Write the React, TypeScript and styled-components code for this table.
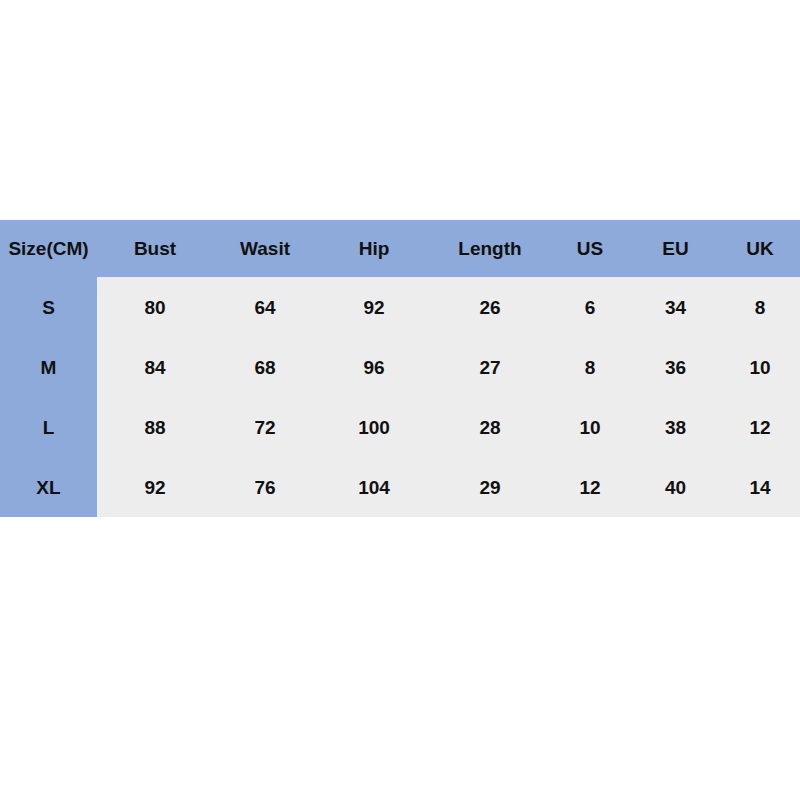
import React from "react";
import styled, { createGlobalStyle } from "styled-components";

const GlobalStyle = createGlobalStyle`
  html, body {
    margin: 0;
    padding: 0;
    background: #ffffff;
  }
`;

const Page = styled.div`
  width: 800px;
  height: 800px;
  padding-top: 220px;
  box-sizing: border-box;
  font-family: "Liberation Sans", Arial, sans-serif;
`;

const Table = styled.div`
  display: grid;
  grid-template-columns: 97px 116px 104px 114px 118px 82px 89px 80px;
  grid-template-rows: 57px repeat(4, 60px);
  width: 800px;
  background: #ededed;
`;

const Cell = styled.div<{ $blue?: boolean }>`
  display: flex;
  align-items: center;
  justify-content: center;
  padding-top: 1px;
  background: ${(p) => (p.$blue ? "#8eaadb" : "transparent")};
  color: #111;
  font-weight: bold;
  font-size: 19px;
  white-space: nowrap;
`;

const headers = ["Size(CM)", "Bust", "Wasit", "Hip", "Length", "US", "EU", "UK"];

const rows = [
  ["S", "80", "64", "92", "26", "6", "34", "8"],
  ["M", "84", "68", "96", "27", "8", "36", "10"],
  ["L", "88", "72", "100", "28", "10", "38", "12"],
  ["XL", "92", "76", "104", "29", "12", "40", "14"],
];

export default function App() {
  return (
    <>
      <GlobalStyle />
      <Page>
        <Table>
          {headers.map((h) => (
            <Cell key={h} $blue>
              {h}
            </Cell>
          ))}
          {rows.map((row) =>
            row.map((v, i) => (
              <Cell key={row[0] + i} $blue={i === 0}>
                {v}
              </Cell>
            ))
          )}
        </Table>
      </Page>
    </>
  );
}
